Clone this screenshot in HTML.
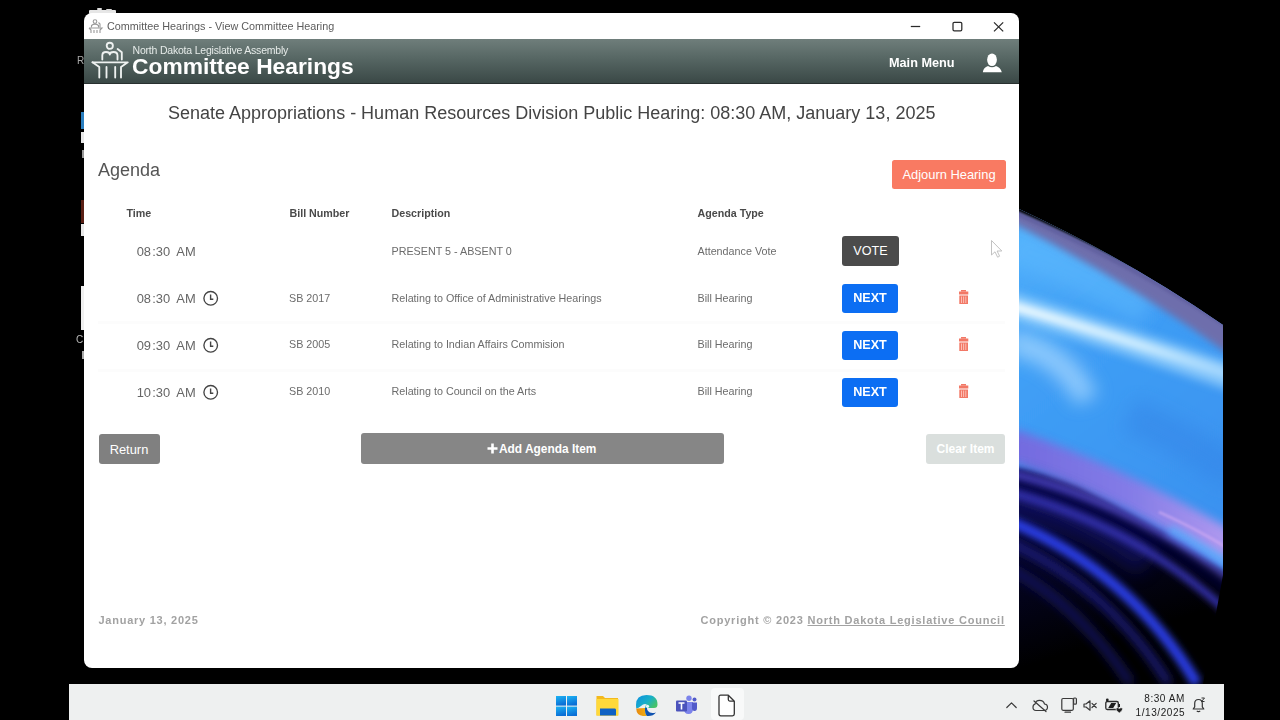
<!DOCTYPE html>
<html><head><meta charset="utf-8">
<style>
*{margin:0;padding:0;box-sizing:border-box}
html,body{width:1280px;height:720px;overflow:hidden;background:#000;font-family:"Liberation Sans",sans-serif;position:relative}
.a{position:absolute;white-space:pre;line-height:1}
.r{position:absolute}
#win{position:absolute;left:84px;top:13px;width:935px;height:655px;background:#fff;border-radius:8px;overflow:hidden}
#hdr{position:absolute;left:84px;top:39px;width:935px;height:45px;background:linear-gradient(#6f7e7b,#566663 45%,#3a4846);border-bottom:1px solid #28302f}
.btn{position:absolute;border-radius:3px;color:#fff;text-align:center;white-space:pre;line-height:29px}
.th{position:absolute;white-space:pre;line-height:1;font-size:10.7px;font-weight:bold;color:#4a4a4a}
.td{position:absolute;white-space:pre;line-height:1;font-size:10.75px;color:#6c6c6c}
.tm{position:absolute;white-space:pre;line-height:1;font-size:12.9px;color:#666}
.sep{position:absolute;left:98px;width:907px;height:3px;background:#fcfcfc}
#taskbar{position:absolute;left:69px;top:684px;width:1155px;height:36px;background:#eef0f0}
#all{position:absolute;left:0;top:0;width:1280px;height:720px;filter:blur(0.35px)}
</style></head><body><div id="all">

<!-- desktop bits on left -->
<div class="a" style="left:77px;top:56px;font-size:10px;color:#aaa">R</div>
<div class="r" style="left:81px;top:112px;width:3px;height:17px;background:#2a7fc0"></div>
<div class="r" style="left:81px;top:132px;width:3px;height:11px;background:#e8e8e8"></div>
<div class="r" style="left:81px;top:200px;width:3px;height:23px;background:#5a1f14"></div>
<div class="r" style="left:81px;top:224px;width:3px;height:12px;background:#e8e8e8"></div>
<div class="r" style="left:81px;top:286px;width:3px;height:44px;background:#f0f0f0"></div>
<div class="a" style="left:76px;top:335px;font-size:10px;color:#bbb">C</div>
<div class="r" style="left:81.5px;top:150px;width:2.5px;height:8px;background:#999"></div>
<div class="r" style="left:82px;top:351px;width:2px;height:8px;background:#aaa"></div>
<div class="r" style="left:89px;top:9.5px;width:27px;height:4px;background:#e6e6e6;border-radius:1px"></div>
<div class="r" style="left:97px;top:8.3px;width:5px;height:2px;background:#ddd;border-radius:1px"></div>
<div class="r" style="left:106px;top:8.8px;width:6px;height:2px;background:#ddd;border-radius:1px"></div>

<!-- wallpaper bloom -->
<svg class="r" style="left:1019px;top:190px" width="204" height="494" viewBox="0 0 204 494">
  <defs>
    <clipPath id="bc"><path d="M0 19 Q110 70 204 135 L204 385 L184 494 L0 494 Z"/></clipPath>
    <filter id="b1" x="-50%" y="-50%" width="200%" height="200%"><feGaussianBlur stdDeviation="1.2"/></filter>
    <filter id="b2" x="-50%" y="-50%" width="200%" height="200%"><feGaussianBlur stdDeviation="2.5"/></filter>
    <filter id="b3" x="-50%" y="-50%" width="200%" height="200%"><feGaussianBlur stdDeviation="3.5"/></filter>
    <filter id="b4" x="-50%" y="-50%" width="200%" height="200%"><feGaussianBlur stdDeviation="5"/></filter>
    <filter id="b8" x="-50%" y="-50%" width="200%" height="200%"><feGaussianBlur stdDeviation="9"/></filter>
    <linearGradient id="blue" x1="0" y1="0" x2="0.5" y2="1">
      <stop offset="0" stop-color="#52b2fc"/><stop offset="0.45" stop-color="#3f9ef5"/><stop offset="1" stop-color="#3a92f0"/>
    </linearGradient>
    <linearGradient id="pb" gradientUnits="userSpaceOnUse" x1="0" y1="0" x2="204" y2="0">
      <stop offset="0" stop-color="#7868de"/><stop offset="0.55" stop-color="#8a7ae6"/><stop offset="1" stop-color="#b898ee"/>
    </linearGradient>
    <linearGradient id="ws" gradientUnits="userSpaceOnUse" x1="0" y1="0" x2="204" y2="0">
      <stop offset="0" stop-color="#f0fbff" stop-opacity="0.95"/><stop offset="0.6" stop-color="#d8f2ff" stop-opacity="0.85"/><stop offset="1" stop-color="#b8e2ff" stop-opacity="0.6"/>
    </linearGradient>
    <linearGradient id="nv" gradientUnits="userSpaceOnUse" x1="0" y1="270" x2="60" y2="460">
      <stop offset="0" stop-color="#0c0c5a"/><stop offset="0.45" stop-color="#05052a"/><stop offset="1" stop-color="#000"/>
    </linearGradient>
  </defs>
  <g clip-path="url(#bc)">
    <rect x="0" y="0" width="204" height="494" fill="#000"/>
    <!-- navy under band -->
    <path d="M-20 262 Q110 305 230 375 L230 494 L-20 494 Z" fill="url(#nv)"/>
    <!-- blue body -->
    <path d="M-20 0 L230 0 L230 398 Q150 342 60 296 Q20 280 -20 274 Z" fill="url(#blue)" filter="url(#b2)"/>
    <!-- lighter top-left -->
    <path d="M-10 55 Q60 78 130 118" fill="none" stroke="#62bcff" stroke-width="40" opacity="0.5" filter="url(#b8)"/>
    <!-- slightly darker mid-right -->
    <path d="M110 225 Q165 248 215 285" fill="none" stroke="#3080e4" stroke-width="36" opacity="0.4" filter="url(#b8)"/>
    <!-- purple-grey rim -->
    <path d="M-10 12 Q110 65 215 128 L215 168 Q110 92 -10 31 Z" fill="#6e6eac" filter="url(#b3)"/>
    <path d="M-10 20 Q110 72 215 140" fill="none" stroke="#5c5a9a" stroke-width="5" opacity="0.6" filter="url(#b1)"/>
    <!-- white streak -->
    <path d="M-10 115 Q100 148 215 188" fill="none" stroke="#a8dcff" stroke-width="26" opacity="0.65" filter="url(#b4)"/>
    <path d="M-10 115 Q100 147 215 186" fill="none" stroke="url(#ws)" stroke-width="10" filter="url(#b3)"/>
    <!-- secondary soft wisp -->
    <path d="M-10 152 Q45 162 68 210" fill="none" stroke="#a8d8ff" stroke-width="24" opacity="0.75" filter="url(#b8)"/>
    <!-- purple band -->
    <path d="M-10 254 Q100 292 215 360" fill="none" stroke="url(#pb)" stroke-width="32" opacity="0.92" filter="url(#b4)"/>
    <path d="M150 340 Q185 360 215 378" fill="none" stroke="#58b0ff" stroke-width="12" opacity="0.7" filter="url(#b3)"/>
    <path d="M140 322 Q180 340 215 362" fill="none" stroke="#d8b0f4" stroke-width="3" opacity="0.55" filter="url(#b1)"/>
    <path d="M-10 300 Q70 322 130 370" fill="none" stroke="#14146e" stroke-width="36" opacity="0.6" filter="url(#b8)"/>
    <!-- dark stripe under band -->
    <path d="M-10 290 Q110 322 215 405" fill="none" stroke="#06063a" stroke-width="10" opacity="0.7" filter="url(#b3)"/>
    <!-- streaks -->
    <path d="M-10 283 Q110 312 215 392" fill="none" stroke="#5a50d8" stroke-width="7" opacity="0.8" filter="url(#b3)"/>
    <path d="M-10 302 Q120 338 212 425" fill="none" stroke="#3430b0" stroke-width="8" filter="url(#b3)"/>
    <path d="M-10 331 Q111 381 178 494" fill="none" stroke="#2c3ce4" stroke-width="11" filter="url(#b3)"/>
        <path d="M-10 352 Q90 398 150 494" fill="none" stroke="#1c1c80" stroke-width="8" filter="url(#b4)"/>
    <path d="M-10 378 Q60 415 112 494" fill="none" stroke="#12125a" stroke-width="9" filter="url(#b4)"/>
    <path d="M-10 15 Q110 67 215 132" fill="none" stroke="#000" stroke-width="4" filter="url(#b1)"/>
  </g>
</svg>

<div id="win"></div>
<!-- title bar -->
<svg class="r" style="left:88px;top:19px" width="16" height="15" viewBox="0 0 16 15">
  <g fill="none" stroke="#999" stroke-width="1.1">
    <circle cx="7" cy="2.6" r="1.8"/>
    <path d="M3.5 8.5 V6.5 Q7 3.8 10.5 6.5 V8.5 M10.5 3.5 L12 5 V8.5"/>
    <path d="M1 9 H14 L12 11 V14 M1 9 L3 11 V14 M6 11 V14 M9 11 V14"/>
  </g>
</svg>
<div class="a" style="left:107px;top:21px;font-size:10.8px;color:#5c5c5c">Committee Hearings - View Committee Hearing</div>
<svg class="r" style="left:905px;top:18px" width="105" height="18" viewBox="0 0 105 18">
  <g fill="none" stroke="#2a2a2a" stroke-width="1.25">
    <path d="M5.8 8.5 H15.2"/>
    <rect x="48" y="4.3" width="8.8" height="8.6" rx="1.3"/>
    <path d="M89 4.4 L98.2 13.4 M98.2 4.4 L89 13.4"/>
  </g>
</svg>

<!-- header -->
<div id="hdr"></div>
<svg class="r" style="left:90px;top:40px" width="42" height="42" viewBox="0 0 42 42">
  <g fill="none" stroke="#eef1f0" stroke-width="1.85" stroke-linecap="round" stroke-linejoin="round">
    <circle cx="19.8" cy="5.8" r="3.1"/>
    <path d="M12.3 19.5 V15.5 Q12.3 12 16 12 Q19.8 12 19.8 14.5 Q19.8 12 23.6 12 Q27.5 12 27.5 15.5 V19.5"/>
    <path d="M27.6 9 L31.8 12.3 V19.5"/>
    <path d="M2.5 22.3 H37.8 L31 27 V37.5"/>
    <path d="M2.5 22.3 L9.3 27 V37.5"/>
    <path d="M16.5 27 V37.5 M25.2 27 V37.5"/>
    
  </g>
</svg>
<div class="a" style="left:132.5px;top:44.6px;font-size:10.5px;color:#e6ebe9;letter-spacing:-0.2px">North Dakota Legislative Assembly</div>
<div class="a" style="left:132px;top:55.3px;font-size:22.8px;font-weight:bold;color:#fff">Committee Hearings</div>
<div class="a" style="left:889px;top:57px;font-size:12.7px;font-weight:bold;color:#fff">Main Menu</div>
<svg class="r" style="left:981px;top:52px" width="22" height="22" viewBox="0 0 22 22">
  <ellipse cx="11" cy="7.7" rx="4.9" ry="6.3" fill="#fff"/>
  <path d="M1.8 20.3 Q2.5 15.5 7 14 Q11 16.5 15 14 Q19.5 15.5 20.8 20.3 Z" fill="#fff"/>
</svg>

<!-- title -->
<div class="a" style="left:168px;top:104px;font-size:18px;color:#444">Senate Appropriations - Human Resources Division Public Hearing: 08:30 AM, January 13, 2025</div>
<div class="a" style="left:98px;top:160.5px;font-size:18px;color:#555">Agenda</div>
<div class="btn" style="left:892px;top:159.7px;width:114px;height:29.5px;background:#f97a62;font-size:12.9px;line-height:30.5px;border-radius:2.5px">Adjourn Hearing</div>

<!-- table header -->
<div class="th" style="left:126.5px;top:208px">Time</div>
<div class="th" style="left:289.5px;top:208px">Bill Number</div>
<div class="th" style="left:391.5px;top:208px">Description</div>
<div class="th" style="left:697.5px;top:208px">Agenda Type</div>

<!-- row 1 -->
<div class="tm" style="left:136.7px;top:245.6px">08</div><div class="tm" style="left:152.3px;top:245.6px">:</div><div class="tm" style="left:155.8px;top:245.6px">30</div><div class="tm" style="left:176.3px;top:245.6px">AM</div>
<div class="td" style="left:391.5px;top:246px">PRESENT 5 - ABSENT 0</div>
<div class="td" style="left:697.5px;top:246px">Attendance Vote</div>
<div class="btn" style="left:842px;top:236px;width:57px;height:29.5px;background:#4b4b4b;font-size:12.6px;line-height:31.5px">VOTE</div>

<!-- row 2 -->
<div class="tm" style="left:136.7px;top:292.6px">08</div><div class="tm" style="left:152.3px;top:292.6px">:</div><div class="tm" style="left:155.8px;top:292.6px">30</div><div class="tm" style="left:176.3px;top:292.6px">AM</div>
<svg class="r" style="left:202px;top:290px" width="18" height="18" viewBox="0 0 18 18"><circle cx="8.7" cy="8.3" r="6.8" fill="none" stroke="#444" stroke-width="1.35"/><path d="M8.6 4.6 V9.2 H11.3" fill="none" stroke="#444" stroke-width="1.4"/></svg>
<div class="td" style="left:289px;top:292.5px">SB 2017</div>
<div class="td" style="left:391.5px;top:292.5px">Relating to Office of Administrative Hearings</div>
<div class="td" style="left:697.5px;top:292.5px">Bill Hearing</div>
<div class="btn" style="left:842px;top:283.5px;width:56px;height:29.5px;background:#0c6ef3;font-size:12.6px;font-weight:bold">NEXT</div>
<svg class="r" style="left:958px;top:289px" width="12" height="16" viewBox="0 0 12 16"><g fill="#f27866"><rect x="3" y="1" width="5" height="1.6"/><rect x="1" y="2.5" width="9.3" height="3"/><rect x="1.3" y="6.5" width="8.7" height="8.5"/></g><g stroke="#fcd2ca" stroke-width="0.8"><path d="M3.5 7.5 V14 M5.6 7.5 V14 M7.8 7.5 V14"/></g></svg>
<div class="sep" style="top:321px"></div>

<!-- row 3 -->
<div class="tm" style="left:136.7px;top:339.6px">09</div><div class="tm" style="left:152.3px;top:339.6px">:</div><div class="tm" style="left:155.8px;top:339.6px">30</div><div class="tm" style="left:176.3px;top:339.6px">AM</div>
<svg class="r" style="left:202px;top:337px" width="18" height="18" viewBox="0 0 18 18"><circle cx="8.7" cy="8.3" r="6.8" fill="none" stroke="#444" stroke-width="1.35"/><path d="M8.6 4.6 V9.2 H11.3" fill="none" stroke="#444" stroke-width="1.4"/></svg>
<div class="td" style="left:289px;top:339px">SB 2005</div>
<div class="td" style="left:391.5px;top:339px">Relating to Indian Affairs Commision</div>
<div class="td" style="left:697.5px;top:339px">Bill Hearing</div>
<div class="btn" style="left:842px;top:330.5px;width:56px;height:29.5px;background:#0c6ef3;font-size:12.6px;font-weight:bold">NEXT</div>
<svg class="r" style="left:958px;top:336px" width="12" height="16" viewBox="0 0 12 16"><g fill="#f27866"><rect x="3" y="1" width="5" height="1.6"/><rect x="1" y="2.5" width="9.3" height="3"/><rect x="1.3" y="6.5" width="8.7" height="8.5"/></g><g stroke="#fcd2ca" stroke-width="0.8"><path d="M3.5 7.5 V14 M5.6 7.5 V14 M7.8 7.5 V14"/></g></svg>
<div class="sep" style="top:369px"></div>

<!-- row 4 -->
<div class="tm" style="left:136.7px;top:386.6px">10</div><div class="tm" style="left:152.3px;top:386.6px">:</div><div class="tm" style="left:155.8px;top:386.6px">30</div><div class="tm" style="left:176.3px;top:386.6px">AM</div>
<svg class="r" style="left:202px;top:384px" width="18" height="18" viewBox="0 0 18 18"><circle cx="8.7" cy="8.3" r="6.8" fill="none" stroke="#444" stroke-width="1.35"/><path d="M8.6 4.6 V9.2 H11.3" fill="none" stroke="#444" stroke-width="1.4"/></svg>
<div class="td" style="left:289px;top:386px">SB 2010</div>
<div class="td" style="left:391.5px;top:386px">Relating to Council on the Arts</div>
<div class="td" style="left:697.5px;top:386px">Bill Hearing</div>
<div class="btn" style="left:842px;top:377.5px;width:56px;height:29.5px;background:#0c6ef3;font-size:12.6px;font-weight:bold">NEXT</div>
<svg class="r" style="left:958px;top:383px" width="12" height="16" viewBox="0 0 12 16"><g fill="#f27866"><rect x="3" y="1" width="5" height="1.6"/><rect x="1" y="2.5" width="9.3" height="3"/><rect x="1.3" y="6.5" width="8.7" height="8.5"/></g><g stroke="#fcd2ca" stroke-width="0.8"><path d="M3.5 7.5 V14 M5.6 7.5 V14 M7.8 7.5 V14"/></g></svg>

<!-- cursor -->
<svg class="r" style="left:990px;top:239px" width="14" height="20" viewBox="0 0 14 20"><path d="M1.5 1.5 V16 L5 12.8 L7.6 18.2 L9.6 17.2 L7.1 12 H11.8 Z" fill="#fff" stroke="#bbb" stroke-width="0.9"/></svg>

<!-- footer buttons -->
<div class="btn" style="left:98.5px;top:434px;width:61px;height:30px;background:#808080;font-size:12.9px;line-height:31px">Return</div>
<div class="btn" style="left:360.5px;top:433px;width:363px;height:31px;background:#868686"></div>
<svg class="r" style="left:487px;top:442.5px" width="11" height="11" viewBox="0 0 11 11"><path d="M5.5 0.5 V10.5 M0.5 5.5 H10.5" stroke="#fff" stroke-width="2.6"/></svg>
<div class="a" style="left:499px;top:443.5px;font-size:11.9px;font-weight:bold;color:#fff">Add Agenda Item</div>
<div class="btn" style="left:926px;top:434px;width:79px;height:29.5px;background:#dadfdd;font-size:12px;font-weight:bold;line-height:30px">Clear Item</div>

<!-- footer -->
<div class="a" style="left:98.5px;top:614.5px;font-size:11px;font-weight:bold;color:#a2a2a2;letter-spacing:0.75px">January 13, 2025</div>
<div class="a" style="left:700.5px;top:614.5px;font-size:11px;font-weight:bold;color:#a2a2a2;letter-spacing:0.78px">Copyright © 2023 <span style="text-decoration:underline">North Dakota Legislative Council</span></div>

<!-- taskbar -->
<div id="taskbar"></div>
<div class="r" style="left:711px;top:688px;width:33px;height:32px;background:#f8f9f9;border-radius:4px"></div>
<!-- windows logo -->
<svg class="r" style="left:555px;top:695px" width="23" height="22" viewBox="0 0 23 22">
  <defs><linearGradient id="wl" x1="0" y1="0" x2="0.3" y2="1"><stop offset="0" stop-color="#1cb4f4"/><stop offset="1" stop-color="#0a6fd6"/></linearGradient></defs>
  <g fill="url(#wl)"><rect x="1" y="1" width="10" height="9.6"/><rect x="12" y="1" width="10" height="9.6"/><rect x="1" y="11.6" width="10" height="9.4"/><rect x="12" y="11.6" width="10" height="9.4"/></g>
</svg>
<!-- folder -->
<svg class="r" style="left:595px;top:695px" width="25" height="22" viewBox="0 0 25 22">
  <path d="M1.5 1 H8 L10 3 H23 V20.5 H1.5 Z" fill="#f3b91d"/>
  <path d="M1.5 4 H23.5 V20.5 H1.5 Z" fill="#ffd93a"/>
  <path d="M5 13.5 H20 Q21 13.5 21 15 V20.5 H5 Z" fill="#0f62c4"/>
</svg>
<!-- edge -->
<svg class="r" style="left:635px;top:694px" width="24" height="23" viewBox="0 0 24 23">
  <defs>
    <linearGradient id="eg1" x1="0" y1="0" x2="1" y2="0.6"><stop offset="0" stop-color="#0c8fe0"/><stop offset="0.6" stop-color="#18b0c8"/><stop offset="1" stop-color="#46c26a"/></linearGradient>
    <linearGradient id="eg2" x1="0" y1="0" x2="1" y2="0"><stop offset="0" stop-color="#e88a10"/><stop offset="1" stop-color="#f2b010"/></linearGradient>
  </defs>
  <path d="M1 11 Q1 1 11.5 1 Q22.5 1 22.5 10.5 Q22.5 14 19 14 H10 Q10 11 12 10.5 Q9 9 6 12 Q3.5 14 1.2 14.5 Z" fill="url(#eg1)"/>
  <path d="M1.2 14.5 Q1.5 21.5 8 22 H12 Q9.5 19 10 14 Z" fill="url(#eg2)"/>
  <path d="M10 14 Q9.5 19 12 22 Q18 22.5 21 18.5 Q15 20 13 17 Q11.8 15.5 12 14 Z" fill="#1053b0"/>
  <circle cx="12.5" cy="12.3" r="1.6" fill="#e8f6ff"/>
</svg>
<!-- teams -->
<svg class="r" style="left:675px;top:695px" width="23" height="20" viewBox="0 0 23 20">
  <circle cx="14" cy="3.3" r="2.7" fill="#7b83eb"/>
  <circle cx="19.5" cy="4.5" r="2" fill="#5059c9"/>
  <path d="M9 7 H18 V14 Q18 19 13.5 19 Q9 19 9 14 Z" fill="#7b83eb"/>
  <path d="M17 7.5 H22 V13 Q22 16 19.5 16 Q17 16 17 13 Z" fill="#5059c9"/>
  <rect x="1" y="5.5" width="11" height="11" rx="1" fill="#4b53bc"/>
  <path d="M3.5 8 H9.5 M6.5 8 V14.5" stroke="#fff" stroke-width="1.6"/>
</svg>
<!-- document -->
<svg class="r" style="left:717px;top:694px" width="20" height="23" viewBox="0 0 20 23">
  <path d="M2 2.8 Q2 1.2 3.6 1.2 H11.3 L17.3 7.2 V20 Q17.3 21.8 15.5 21.8 H3.8 Q2 21.8 2 20 Z" fill="#fff" stroke="#333" stroke-width="1.3" stroke-linejoin="round"/>
  <path d="M11.3 1.5 V5.6 Q11.3 7.1 12.8 7.1 H17" fill="none" stroke="#333" stroke-width="1.3"/>
</svg>
<!-- tray -->
<svg class="r" style="left:1005px;top:696px" width="120" height="18" viewBox="0 0 120 18">
  <g fill="none" stroke="#3a3a3a" stroke-width="1.2" stroke-linecap="round" stroke-linejoin="round">
    <path d="M1.8 11.5 L6.5 6.8 L11.2 11.5"/>
    <path d="M31 14.5 H39 Q42.5 14.5 42.5 11 Q42.5 8.3 39.5 8 Q38.5 4.4 34.5 4.4 Q30.8 4.4 30 8.2 Q28 8.6 28 11.3 Q28 14.5 31 14.5 Z"/>
    <path d="M29 5 L41 15.5"/>
    <rect x="56.8" y="2.5" width="11.5" height="11.8" rx="1.2"/>
    <path d="M60 16.2 H65.5"/>
    <rect x="68.6" y="2" width="2.8" height="6.2" rx="1" fill="#eff1f1"/>
    <path d="M79 8 H81 L85 4.8 V14.2 L81 11 H79 Z"/>
    <path d="M87 7.3 L91.2 11.5 M91.2 7.3 L87 11.5"/>
  </g>
  <rect x="100.8" y="5.5" width="12.5" height="8" rx="1.5" fill="none" stroke="#2a2a2a" stroke-width="1.3"/>
  <g fill="#1e1e1e">
    <rect x="113.6" y="8" width="1.4" height="3"/>
    <path d="M103.2 12 L106.2 7 H111.2 L108.2 12 Z"/>
    <circle cx="102.3" cy="4" r="1.4"/>
    <path d="M110.8 12.6 Q112.5 10.8 114.3 12.4 Q116.1 10.8 117.8 12.6 Q117.8 14.6 114.3 17 Q110.8 14.6 110.8 12.6 Z" stroke="#eff1f1" stroke-width="0.7"/>
  </g>
</svg>
<div class="a" style="left:1144.3px;top:694.3px;font-size:10px;letter-spacing:0.55px;color:#1a1a1a">8:30 AM</div>
<div class="a" style="left:1135.5px;top:708px;font-size:10px;letter-spacing:0.58px;color:#1a1a1a">1/13/2025</div>
<svg class="r" style="left:1191px;top:697px" width="16" height="16" viewBox="0 0 16 16">
  <g fill="none" stroke="#333" stroke-width="1.2" stroke-linejoin="round">
    <path d="M2.2 12 H12.8 L11.3 9.8 V6.5 Q11.3 2.5 7.5 2.5 Q3.7 2.5 3.7 6.5 V9.8 Z"/>
    <path d="M5.8 13.8 Q7.5 15.5 9.2 13.8"/>
  </g>
  <path d="M10.5 1 H13.5 L10.5 4.5 H13.5" fill="none" stroke="#333" stroke-width="1"/>
</svg>
</div></body></html>
